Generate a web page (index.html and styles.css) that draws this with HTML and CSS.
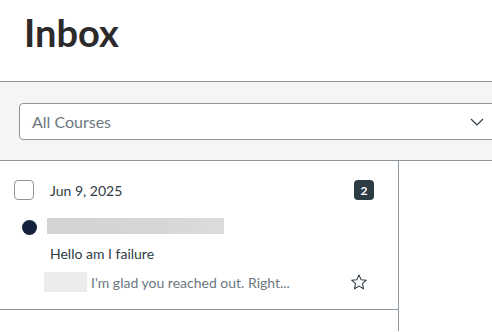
FILE: index.html
```html
<!DOCTYPE html>
<html>
<head>
<meta charset="utf-8">
<link rel="stylesheet" href="styles.css">
</head>
<body>
<header class="header">
  <h1 class="title">Inbox</h1>
</header>
<div class="filters">
  <div class="select">
    <span class="select-text">All Courses</span>
    <svg class="chevron" width="14" height="8" viewBox="0 0 14 8"><path d="M1 1 L7 7 L13 1" fill="none" stroke="#2d3b45" stroke-width="1.2"/></svg>
  </div>
</div>
<main class="main">
  <section class="list">
    <div class="row">
      <div class="line1">
        <span class="checkbox"></span>
        <span class="date">Jun 9, 2025</span>
        <span class="badge">2</span>
      </div>
      <div class="line2">
        <span class="dot"></span>
        <span class="blur-name"></span>
      </div>
      <div class="line3">Hello am I failure</div>
      <div class="line4">
        <span class="blur-small"></span>
        <span class="preview">I'm glad you reached out. Right...</span>
        <svg class="star" width="18" height="18" viewBox="0 0 24 24"><path d="M12 2.5 L14.9 8.9 L21.8 9.6 L16.6 14.2 L18.1 21 L12 17.5 L5.9 21 L7.4 14.2 L2.2 9.6 L9.1 8.9 Z" fill="none" stroke="#2d3b45" stroke-width="1.4" stroke-linejoin="round"/></svg>
      </div>
    </div>
  </section>
  <section class="detail"></section>
</main>
</body>
</html>
```
FILE: styles.css
```css
html, body {
  margin: 0;
  padding: 0;
  background: #fff;
  overflow: hidden;
  font-family: Lato, "Noto Sans", sans-serif;
  color: #2d3b45;
}
.header {
  height: 82px;
  border-bottom: 1px solid #8b969e;
  padding-left: 24px;
  box-sizing: border-box;
  display: flex;
  align-items: flex-start;
}
.title {
  margin: 0;
  padding-top: 9px;
  font-size: 38px;
  line-height: 46px;
  font-weight: 700;
  color: #2d2a2b;
}
.filters {
  background: #f5f5f5;
  border-bottom: 1px solid #8b969e;
  padding: 21px 0 20px 19px;
  display: flex;
  overflow: hidden;
}
.select {
  flex: none;
  width: 500px;
  height: 37px;
  box-sizing: border-box;
  background: #fff;
  border: 1px solid #8b969e;
  border-radius: 4px;
  display: flex;
  align-items: center;
  padding-left: 12px;
}
.select-text {
  font-size: 16px;
  color: #6b7780;
}
.chevron {
  margin-left: 359px;
}
.main {
  display: flex;
  height: 170px;
}
.list {
  width: 398px;
  border-right: 1px solid #8b969e;
  flex: none;
}
.detail {
  flex: 1;
}
.row {
  height: 149px;
  box-sizing: border-box;
  border-bottom: 1px solid #8b969e;
  padding: 19px 24px 0 14px;
}
.line1 {
  display: flex;
  align-items: center;
  height: 20px;
}
.checkbox {
  width: 20px;
  height: 20px;
  box-sizing: border-box;
  border: 1px solid #8b969e;
  border-radius: 4px;
  margin-right: 16px;
}
.date {
  font-size: 14px;
  color: #2d3b45;
}
.badge {
  margin-left: auto;
  width: 20px;
  height: 20px;
  border-radius: 4px;
  background: #2d3b45;
  color: #fff;
  font-size: 12px;
  font-weight: 700;
  display: flex;
  align-items: center;
  justify-content: center;
}
.line2 {
  display: flex;
  align-items: center;
  height: 16px;
  margin-top: 18px;
}
.dot {
  width: 15px;
  height: 15px;
  border-radius: 50%;
  background: #16223d;
  margin-left: 8px;
  margin-top: 3px;
}
.blur-name {
  width: 177px;
  height: 16px;
  margin-left: 10px;
  background: linear-gradient(90deg, #d3d3d3, #d6d6d6 60%, #dcdcdc);
}
.line3 {
  margin-top: 10px;
  padding-left: 36px;
  font-size: 14px;
  line-height: 20px;
  color: #2d3b45;
}
.line4 {
  display: flex;
  align-items: center;
  margin-top: 8px;
  height: 20px;
}
.blur-small {
  width: 43px;
  height: 20px;
  margin-left: 30px;
  background: #ececec;
}
.preview {
  margin-left: 4px;
  font-size: 14px;
  color: #6b7780;
}
.star {
  margin-left: auto;
  margin-right: 6px;
}
```
